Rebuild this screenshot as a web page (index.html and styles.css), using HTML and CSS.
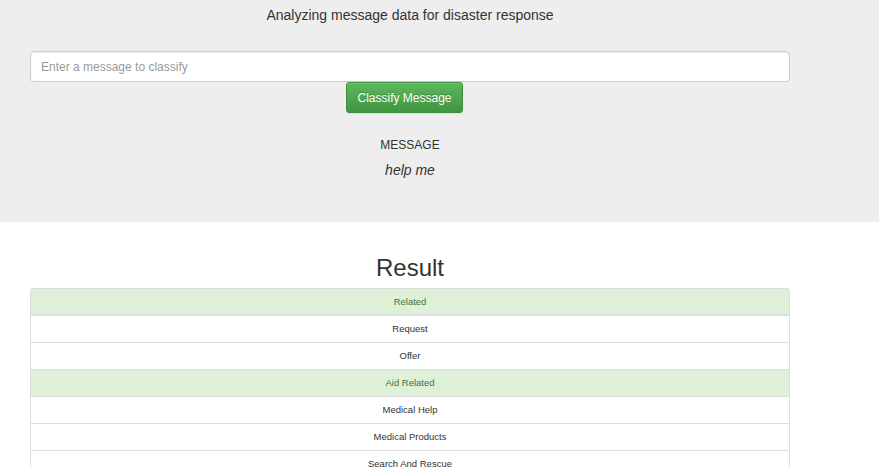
FILE: index.html
```html
<!DOCTYPE html>
<html>
<head>
<meta charset="utf-8">
<link rel="stylesheet" href="styles.css">
</head>
<body>
<div class="jumbo">
  <div class="container">
    <p class="title">Analyzing message data for disaster response</p>
    <form class="form">
      <input class="form-control" type="text" placeholder="Enter a message to classify">
      <div class="btn-row"><button type="button" class="btn">Classify Message</button></div>
    </form>
    <div class="message">
      <div class="msg-label">MESSAGE</div>
      <div class="msg-text">help me</div>
    </div>
  </div>
</div>
<div class="container results">
  <h2 class="result-title">Result</h2>
  <ul class="list">
    <li class="item success thick">Related</li>
    <li class="item">Request</li>
    <li class="item">Offer</li>
    <li class="item success">Aid Related</li>
    <li class="item">Medical Help</li>
    <li class="item">Medical Products</li>
    <li class="item">Search And Rescue</li>
  </ul>
</div>
</body>
</html>
```
FILE: styles.css
```css
html, body { margin: 0; padding: 0; background: #fff; }
body { font-family: "Liberation Sans", Arial, sans-serif; color: #333; overflow: hidden; height: 467px; }
.jumbo { background: #eee; height: 222px; }
.container { width: 760px; margin-left: 30px; }
.title { margin: 0; padding-top: 5px; font-size: 14px; line-height: 20px; text-align: center; color: #333; }
.form { margin: 26px 0 0; display: flex; flex-direction: column; }
.form-control {
  box-sizing: border-box; height: 31px; width: 760px; margin: 0;
  border: 1px solid #ccc; border-radius: 4px; padding: 0 10px;
  font-family: "Liberation Sans", Arial, sans-serif; font-size: 12px; color: #555; background: #fff;
  box-shadow: inset 0 1px 1px rgba(0,0,0,.075); outline: none;
}
.form-control::placeholder { color: #999; }
.btn-row { display: flex; padding-left: 316px; }
.btn {
  box-sizing: border-box; width: 117px; height: 31px; margin: 0; padding: 0;
  font-family: "Liberation Sans", Arial, sans-serif; font-size: 12px; color: #fff;
  border: 1px solid #3e8f3e; border-radius: 3px;
  background: linear-gradient(to bottom, #5cb85c 0%, #419641 100%);
  text-shadow: 0 -1px 0 rgba(0,0,0,.2);
  box-shadow: inset 0 1px 0 rgba(255,255,255,.15), 0 1px 1px rgba(0,0,0,.075);
}
.message { margin-top: 24px; text-align: center; }
.msg-label { font-size: 12px; line-height: 16px; color: #333; }
.msg-text { margin-top: 8px; font-size: 14px; line-height: 18px; font-style: italic; color: #333; }
.results { padding-top: 32px; }
.result-title { margin: 0; font-size: 24px; font-weight: normal; line-height: 28px; text-align: center; color: #333; }
.list { list-style: none; margin: 6px 0 0; padding: 0; border: 1px solid #ddd; border-bottom: none; border-radius: 3px 3px 0 0; }
.item { height: 26px; line-height: 26px; border-bottom: 1px solid #ddd; text-align: center; font-size: 9.5px; color: #333; background: #fff; }
.item.success { background: #dff0d8; color: #3c763d; }
.item.thick { height: 25px; border-bottom: 2px solid #ddd; }
```
